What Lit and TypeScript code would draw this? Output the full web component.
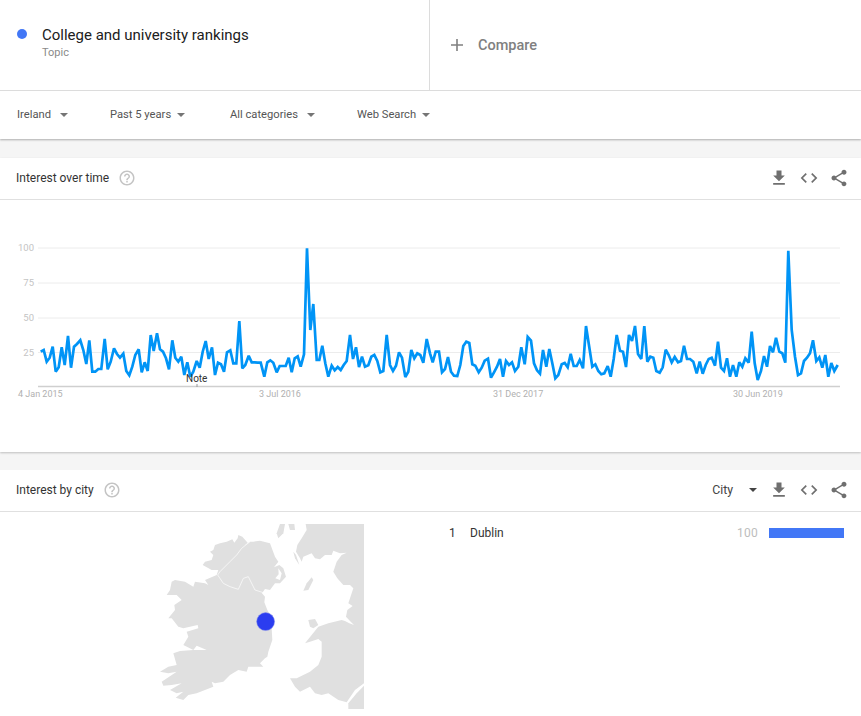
import { LitElement, html, css, svg } from "lit";
import { customElement } from "lit/decorators.js";

const left = [122,350,131,345,140,380,149,368,158,335,167,410,176,397,185,337,194,390,204,303,213,398,222,335,231,327,241,316,250,345,259,387,268,316,277,410,286,410,295,402,304,402,314,312,323,403,332,380,342,340,351,357,360,368,370,356,379,408,388,421,397,395,406,360,416,343,425,412,434,382,443,408,452,300,461,348,471,295,480,343,489,350,498,370,507,403,517,316,526,368,535,380,544,365,553,420,562,382,571,425,580,410,590,378,599,398,608,350,617,318,626,372,636,337,645,420,654,383,663,388,672,410,681,352,691,346,700,385,709,385,718,258,727,400,736,390,746,362,755,382,764,382,773,383,782,383,793,425,802,382,811,376,820,383,830,412,839,393,848,393,857,393,866,368,875,412,884,370,893,364,902,395,912,358,921,40,931,285,940,207,950,375,958,375,967,332,976,385,985,425,995,392,1004,406,1013,396,1022,405,1031,390,1040,378,1050,300,1059,372,1068,337,1077,396,1086,365,1095,395,1105,391,1114,365,1123,360,1132,378,1141,412,1150,408,1160,300,1170,390,1179,408,1188,392,1197,352,1206,368,1216,426,1225,410,1234,345,1243,370,1252,355,1261,360,1270,383,1280,312,1290,355];
const right = [8,382,17,350,27,350,36,412,45,402,54,366,63,410,72,422,82,423,91,390,100,333,109,320,118,324,127,388,136,392,146,412,155,398,164,377,174,371,183,428,192,412,201,395,210,372,219,425,228,378,237,390,246,382,255,408,265,395,274,337,284,388,293,306,303,317,312,385,321,406,330,416,339,345,349,395,358,342,367,385,376,430,385,420,395,388,404,384,413,397,422,356,431,393,440,393,449,375,459,400,468,273,487,395,496,388,505,408,514,418,523,415,533,393,542,425,551,372,560,300,570,347,579,350,588,396,597,300,606,318,615,273,624,357,634,372,643,273,652,380,661,365,670,368,679,408,689,413,698,397,707,344,716,360,725,382,734,366,744,382,753,378,762,332,771,372,780,372,790,380,800,415,809,380,818,416,827,390,836,372,845,368,855,392,864,320,873,398,882,408,891,370,900,425,909,390,919,425,928,382,937,395,946,370,956,383,965,290,974,385,983,435,993,408,1002,363,1011,395,1020,333,1029,352,1038,308,1048,350,1057,355,1066,383,1075,47,1085,285,1095,365,1104,420,1113,415,1122,378,1131,368,1140,355,1149,316,1159,378,1168,367,1177,398,1186,360,1195,425,1204,384,1213,408,1223,390];

function toPoints(a: number[], ox: number): string {
  const out: string[] = [];
  for (let i = 0; i < a.length; i += 2) {
    out.push(`${(ox + a[i] / 3).toFixed(1)},${(235 + a[i + 1] / 3).toFixed(1)}`);
  }
  return out.join(" ");
}
const line = toPoints(left, 0) + " " + toPoints(right, 430);

const ireland = "158,150 165,140 185,135 190,120 180,110 190,105 195,90 210,85 230,80 247,73 253,83 263,70 265,60 277,65 293,83 285,90 300,80 310,80 330,77 360,85 375,125 385,140 372,157 388,150 400,160 408,185 390,205 375,205 360,225 345,222 336,235 345,245 343,262 352,285 360,300 365,340 367,375 355,410 352,425 345,430 330,445 340,455 315,455 295,455 290,470 265,465 240,480 220,500 195,505 185,500 190,515 165,525 140,535 115,540 100,555 77,548 100,530 80,535 60,525 95,505 65,510 40,512 35,500 80,470 55,475 30,470 55,455 80,450 70,415 90,408 130,405 170,405 140,392 130,405 100,390 115,365 110,350 145,340 143,330 100,340 85,335 65,310 55,310 75,285 73,270 95,255 80,240 50,240 60,225 65,200 75,195 105,200 130,215 135,200 165,205 175,210 165,195 200,180 205,165 185,165";
const border = "300,80 275,100 260,120 240,140 210,170 203,180 220,205 240,215 265,223 280,190 295,185 315,225 340,233";
const lough = "385,160 395,175 390,195 376,190 386,178";
const gb = "467,27 470,45 455,70 442,90 438,110 450,130 455,140 460,125 485,115 495,130 510,133 525,120 545,120 550,107 570,115 590,113 575,120 560,140 550,170 562,190 580,210 600,210 610,220 600,250 595,265 608,273 592,285 588,305 600,318 612,330 598,325 585,318 575,315 535,325 505,335 485,360 465,385 480,380 505,372 515,380 515,425 505,450 480,470 440,490 420,490 435,515 450,530 480,515 495,535 515,540 535,535 565,555 590,562 615,525 642,505 642,27";
const swEngland = "642,512 620,535 595,565 595,582 642,582";
const isles = [
  "485,187 490,195 475,225 460,227 470,205",
  "475,315 495,312 505,330 490,340 480,335",
  "390,27 405,27 400,55 385,70 380,55",
  "415,27 433,27 435,45 420,45",
  "430,110 438,120 448,150 435,130",
];

const download = svg`<path d="M19 9h-4V3H9v6H5l7 7 7-7zM5 18v2h14v-2H5z"/>`;
const code = svg`<path d="M9.4 16.6 4.8 12l4.6-4.6L8 6l-6 6 6 6 1.4-1.4zm5.2 0 4.6-4.6-4.6-4.6L16 6l6 6-6 6-1.4-1.4z"/>`;
const share = svg`<path d="M18 16.08c-.76 0-1.44.3-1.96.77L8.91 12.7c.05-.23.09-.46.09-.7s-.04-.47-.09-.7l7.05-4.11c.54.5 1.25.81 2.04.81 1.66 0 3-1.34 3-3s-1.34-3-3-3-3 1.34-3 3c0 .24.04.47.09.7L8.04 9.81C7.5 9.31 6.79 9 6 9c-1.66 0-3 1.34-3 3s1.34 3 3 3c.79 0 1.5-.31 2.04-.81l7.12 4.16c-.05.21-.08.43-.08.65 0 1.61 1.31 2.92 2.92 2.92s2.92-1.31 2.92-2.92-1.31-2.92-2.92-2.92z"/>`;
const help = svg`<path d="M11 18h2v-2h-2v2zm1-16C6.48 2 2 6.48 2 12s4.48 10 10 10 10-4.48 10-10S17.52 2 12 2zm0 18c-4.41 0-8-3.59-8-8s3.59-8 8-8 8 3.59 8 8-3.59 8-8 8zm0-14c-2.21 0-4 1.79-4 4h2c0-1.1.9-2 2-2s2 .9 2 2c0 2-3 1.75-3 5h2c0-2.25 3-2.5 3-5 0-2.21-1.79-4-4-4z"/>`;

const filters = [
  { label: "Ireland", width: 93, gap: 9 },
  { label: "Past 5 years", width: 120, gap: 6 },
  { label: "All categories", width: 127, gap: 9 },
  { label: "Web Search", width: 110, gap: 6 },
];

@customElement("app-root")
export class AppRoot extends LitElement {
  static styles = css`
    :host {
      display: block;
      width: 861px;
      height: 716px;
      overflow: hidden;
      background: #f5f5f5;
      font-family: Roboto, "Liberation Sans", sans-serif;
      color: #212121;
    }
    .top { background: #fff; box-shadow: 0 1px 2px rgba(0,0,0,.3); }
    .terms { display: flex; height: 90px; border-bottom: 1px solid #dcdcdc; }
    .term {
      width: 430px; box-sizing: border-box; border-right: 1px solid #dcdcdc;
      display: flex; padding: 27px 0 0 17px; gap: 15px;
    }
    .dot { width: 10px; height: 10px; border-radius: 50%; background: #4277f6; margin-top: 2px; flex: none; }
    .name { font-size: 15px; line-height: 16px; color: #202020; }
    .kind { font-size: 11px; line-height: 13px; margin-top: 3px; color: #8a8a8a; }
    .compare { display: flex; align-items: center; padding-left: 20px; gap: 14px; color: #808080; font-size: 14.5px; font-weight: 500; }
    .plus { width: 14px; height: 14px; fill: #808080; flex: none; }
    .filters { display: flex; height: 46px; padding: 0 0 2px 17px; align-items: center; }
    .filter { display: flex; align-items: center; font-size: 11.2px; color: #555; flex: none; }
    .caret { width: 0; height: 0; border-left: 4px solid transparent; border-right: 4px solid transparent; border-top: 4px solid #757575; margin-top: 1px; }
    .card { background: #fff; }
    .first { margin-top: 19px; height: 294px; box-shadow: 0 1px 2px rgba(0,0,0,.22); }
    .second { margin-top: 18px; height: 246px; }
    .head {
      display: flex; align-items: center; height: 39px; padding: 0 12px 2px 16px;
      border-bottom: 1px solid #e0e0e0; font-size: 12px; color: #333;
    }
    .help { width: 18px; height: 18px; fill: #c4c4c4; margin-left: 9px; }
    .spacer { flex: 1; }
    .icons { display: flex; gap: 10px; }
    .icon { width: 20px; height: 20px; fill: #6f6f6f; display: block; }
    .city { display: flex; align-items: center; gap: 16px; margin-right: 12px; font-size: 12.3px; color: #444; }
    .citycaret { border-top-color: #444; }
    .chart { display: block; }
    .chart text { font-size: 9px; fill: #b0b0b0; }
    .chart text.axis { fill: #c4c4c4; font-size: 9.5px; }
    .chart text.note { fill: #333; font-size: 10px; }
    .body { display: flex; }
    .map { display: block; flex: none; }
    .rows { flex: 1; padding: 14px 17px 0 19px; }
    .row { display: flex; align-items: center; font-size: 12px; color: #333; height: 14px; }
    .rank { width: 21px; }
    .city-name { flex: 1; }
    .value { width: 32px; color: #bdbdbd; font-size: 12px; letter-spacing: .3px; }
    .bar { width: 75px; height: 10px; background: #4277f6; }
  `;

  private icons() {
    return html`<div class="icons">
      <svg class="icon" viewBox="0 0 24 24">${download}</svg>
      <svg class="icon" viewBox="0 0 24 24">${code}</svg>
      <svg class="icon" viewBox="0 0 24 24">${share}</svg>
    </div>`;
  }

  render() {
    const ticks = [
      { v: "100", y: 248 }, { v: "75", y: 283 }, { v: "50", y: 318 }, { v: "25", y: 352.5 },
    ];
    const dates = [
      { t: "4 Jan 2015", x: 18 }, { t: "3 Jul 2016", x: 259 },
      { t: "31 Dec 2017", x: 493 }, { t: "30 Jun 2019", x: 733 },
    ];
    return html`
      <div class="top">
        <div class="terms">
          <div class="term">
            <span class="dot"></span>
            <div>
              <div class="name">College and university rankings</div>
              <div class="kind">Topic</div>
            </div>
          </div>
          <div class="compare">
            <svg class="plus" viewBox="0 0 14 14"><path d="M6.2 1h1.6v5.2H13v1.6H7.8V13H6.2V7.8H1V6.2h5.2z"/></svg>
            <span>Compare</span>
          </div>
        </div>
        <div class="filters">
          ${filters.map((f) => html`<div class="filter" style="width:${f.width}px;gap:${f.gap}px">
            <span>${f.label}</span><span class="caret"></span></div>`)}
        </div>
      </div>

      <section class="card first">
        <div class="head">
          <span>Interest over time</span>
          <svg class="help" viewBox="0 0 24 24">${help}</svg>
          <span class="spacer"></span>
          ${this.icons()}
        </div>
        <svg class="chart" width="861" height="252" viewBox="0 200 861 252">
          ${ticks.map((t) => svg`
            <line x1="38" x2="840" y1=${t.y} y2=${t.y} stroke="#ececec" stroke-width="1"></line>
            <text class="axis" x="34" y=${t.y + 3} text-anchor="end">${t.v}</text>`)}
          <line x1="38" x2="840" y1="386.5" y2="386.5" stroke="#cfcfcf" stroke-width="1.5"></line>
          <line x1="197" x2="197" y1="384" y2="387" stroke="#999" stroke-width="1"></line>
          ${dates.map((d) => svg`<text x=${d.x} y="397">${d.t}</text>`)}
          <polyline points=${line} fill="none" stroke="#0094f6" stroke-width="2.7" stroke-linejoin="miter" stroke-miterlimit="2.5"></polyline>
          <text class="note" x="186" y="382">Note</text>
        </svg>
      </section>

      <section class="card second">
        <div class="head">
          <span>Interest by city</span>
          <svg class="help" viewBox="0 0 24 24">${help}</svg>
          <span class="spacer"></span>
          <div class="city"><span>City</span><span class="caret citycaret"></span></div>
          ${this.icons()}
        </div>
        <div class="body">
          <svg class="map" width="430" height="204" viewBox="0 512 430 204">
            <g transform="translate(150 515) scale(0.33333)">
              <polygon points=${ireland} fill="#e0e0e0"></polygon>
              <polyline points=${border} fill="none" stroke="#fff" stroke-width="2"></polyline>
              <polygon points=${lough} fill="#fff"></polygon>
              <polygon points=${gb} fill="#e0e0e0"></polygon>
              <polygon points=${swEngland} fill="#e0e0e0"></polygon>
              ${isles.map((p) => svg`<polygon points=${p} fill="#e0e0e0"></polygon>`)}
            </g>
            <circle cx="265.6" cy="621.6" r="9" fill="#2b3df0" stroke="#8f97e8" stroke-width=".5"></circle>
          </svg>
          <div class="rows">
            <div class="row">
              <span class="rank">1</span>
              <span class="city-name">Dublin</span>
              <span class="value">100</span>
              <span class="bar"></span>
            </div>
          </div>
        </div>
      </section>
    `;
  }
}
